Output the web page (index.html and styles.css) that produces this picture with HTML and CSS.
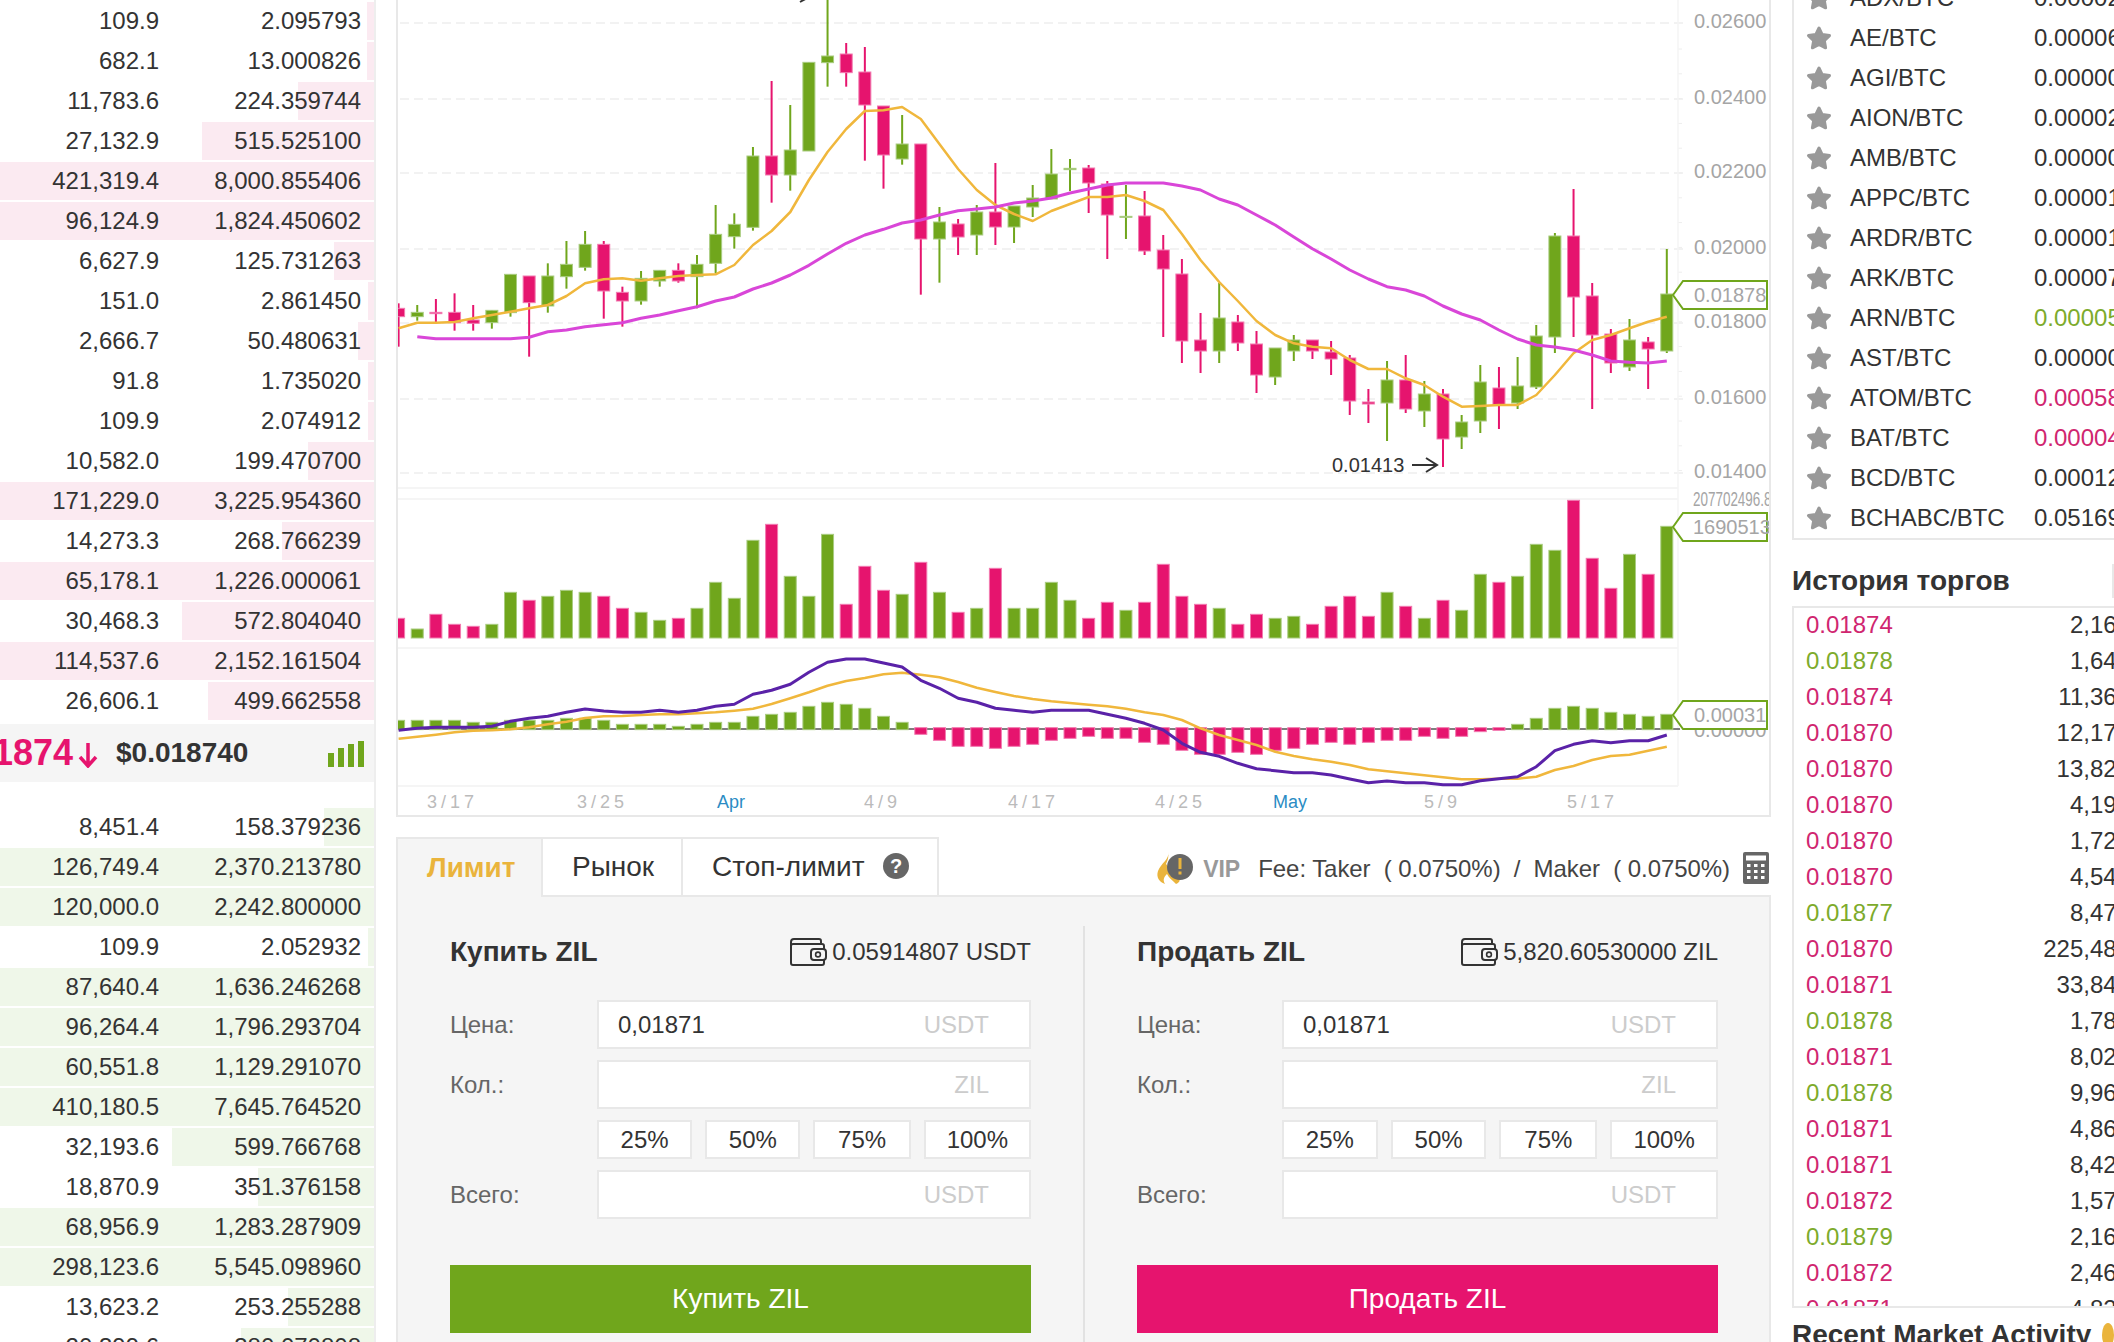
FILE: index.html
```html
<!DOCTYPE html>
<html lang="ru">
<head>
  <meta charset="UTF-8">
  <title>ZIL/USDT</title>
  <link rel="stylesheet" href="styles.css">
</head>
<body>

  <svg class="defs" width="0" height="0">
    <symbol id="star" viewBox="0 0 26 26">
      <polygon points="13,3 16.2,9.6 23.5,10.6 18.3,15.6 19.6,22.8 13,19.4 6.4,22.8 7.7,15.6 2.5,10.6 9.8,9.6" fill="#999" stroke="#999" stroke-width="3" stroke-linejoin="round"/>
    </symbol>
    <symbol id="wallet" viewBox="0 0 38 30">
      <path d="M2 9V5a3 3 0 0 1 3-3h25a2 2 0 0 1 2 2v3" fill="none" stroke="#333" stroke-width="2"/>
      <rect x="2" y="7" width="33" height="21" rx="2" fill="none" stroke="#333" stroke-width="2"/>
      <rect x="22" y="12" width="15" height="11" rx="3" fill="#f5f5f5" stroke="#333" stroke-width="2"/>
      <circle cx="29" cy="17.5" r="2.4" fill="none" stroke="#333" stroke-width="1.6"/>
    </symbol>
  </svg>

  <div class="page">

    <!-- order book -->
    <div class="book">
      <div class="row"><i class="bar ask" style="width:7px"></i><span class="p">109.9</span><span class="q">2.095793</span></div>
      <div class="row"><i class="bar ask" style="width:7px"></i><span class="p">682.1</span><span class="q">13.000826</span></div>
      <div class="row"><i class="bar ask" style="width:76px"></i><span class="p">11,783.6</span><span class="q">224.359744</span></div>
      <div class="row"><i class="bar ask" style="width:172px"></i><span class="p">27,132.9</span><span class="q">515.525100</span></div>
      <div class="row"><i class="bar ask" style="width:374px"></i><span class="p">421,319.4</span><span class="q">8,000.855406</span></div>
      <div class="row"><i class="bar ask" style="width:374px"></i><span class="p">96,124.9</span><span class="q">1,824.450602</span></div>
      <div class="row"><i class="bar ask" style="width:40px"></i><span class="p">6,627.9</span><span class="q">125.731263</span></div>
      <div class="row"><i class="bar ask" style="width:6px"></i><span class="p">151.0</span><span class="q">2.861450</span></div>
      <div class="row"><i class="bar ask" style="width:16px"></i><span class="p">2,666.7</span><span class="q">50.480631</span></div>
      <div class="row"><i class="bar ask" style="width:6px"></i><span class="p">91.8</span><span class="q">1.735020</span></div>
      <div class="row"><i class="bar ask" style="width:6px"></i><span class="p">109.9</span><span class="q">2.074912</span></div>
      <div class="row"><i class="bar ask" style="width:66px"></i><span class="p">10,582.0</span><span class="q">199.470700</span></div>
      <div class="row"><i class="bar ask" style="width:374px"></i><span class="p">171,229.0</span><span class="q">3,225.954360</span></div>
      <div class="row"><i class="bar ask" style="width:92px"></i><span class="p">14,273.3</span><span class="q">268.766239</span></div>
      <div class="row"><i class="bar ask" style="width:374px"></i><span class="p">65,178.1</span><span class="q">1,226.000061</span></div>
      <div class="row"><i class="bar ask" style="width:192px"></i><span class="p">30,468.3</span><span class="q">572.804040</span></div>
      <div class="row"><i class="bar ask" style="width:374px"></i><span class="p">114,537.6</span><span class="q">2,152.161504</span></div>
      <div class="row"><i class="bar ask" style="width:166px"></i><span class="p">26,606.1</span><span class="q">499.662558</span></div>

      <div class="mid">
        <span class="last">0.01874</span>
        <svg class="down" width="20" height="26" viewBox="0 0 20 26"><path d="M10 1V23M2 15L10 24L18 15" fill="none" stroke="#e6146e" stroke-width="3.5"/></svg>
        <span class="usd">$0.018740</span>
        <span class="signal"><i style="height:14px"></i><i style="height:19px"></i><i style="height:23px"></i><i style="height:26px"></i></span>
      </div>

      <div class="row"><i class="bar bid" style="width:50px"></i><span class="p">8,451.4</span><span class="q">158.379236</span></div>
      <div class="row"><i class="bar bid" style="width:374px"></i><span class="p">126,749.4</span><span class="q">2,370.213780</span></div>
      <div class="row"><i class="bar bid" style="width:374px"></i><span class="p">120,000.0</span><span class="q">2,242.800000</span></div>
      <div class="row"><i class="bar bid" style="width:6px"></i><span class="p">109.9</span><span class="q">2.052932</span></div>
      <div class="row"><i class="bar bid" style="width:374px"></i><span class="p">87,640.4</span><span class="q">1,636.246268</span></div>
      <div class="row"><i class="bar bid" style="width:374px"></i><span class="p">96,264.4</span><span class="q">1,796.293704</span></div>
      <div class="row"><i class="bar bid" style="width:374px"></i><span class="p">60,551.8</span><span class="q">1,129.291070</span></div>
      <div class="row"><i class="bar bid" style="width:374px"></i><span class="p">410,180.5</span><span class="q">7,645.764520</span></div>
      <div class="row"><i class="bar bid" style="width:202px"></i><span class="p">32,193.6</span><span class="q">599.766768</span></div>
      <div class="row"><i class="bar bid" style="width:116px"></i><span class="p">18,870.9</span><span class="q">351.376158</span></div>
      <div class="row"><i class="bar bid" style="width:374px"></i><span class="p">68,956.9</span><span class="q">1,283.287909</span></div>
      <div class="row"><i class="bar bid" style="width:374px"></i><span class="p">298,123.6</span><span class="q">5,545.098960</span></div>
      <div class="row"><i class="bar bid" style="width:86px"></i><span class="p">13,623.2</span><span class="q">253.255288</span></div>
      <div class="row"><i class="bar bid" style="width:133px"></i><span class="p">20,399.6</span><span class="q">380.070808</span></div>
    </div>

    <!-- chart and order form -->
    <div class="main">
      <div class="chart-panel">
        <svg id="chart" width="1371" height="815" viewBox="398 0 1371 815">
          <g id="chart-back"></g>
          <g id="chart-marks"></g>

          <text class="axis" x="1694" y="28">0.02600</text>
          <text class="axis" x="1694" y="104">0.02400</text>
          <text class="axis" x="1694" y="178">0.02200</text>
          <text class="axis" x="1694" y="254">0.02000</text>
          <text class="axis" x="1694" y="328">0.01800</text>
          <text class="axis" x="1694" y="404">0.01600</text>
          <text class="axis" x="1694" y="478">0.01400</text>

          <text class="extreme" x="718" y="-1">0.02695</text>
          <path class="arrow" d="M788 -3H808M800 -8L809 -3L800 2"/>
          <text class="extreme" x="1332" y="472">0.01413</text>
          <path class="arrow" d="M1412 465H1436M1426 458L1437 465L1426 472"/>

          <polygon class="tag" points="1673,295 1683,281 1767,281 1767,309 1683,309"/>
          <text class="axis" x="1694" y="302">0.01878</text>

          <text class="axis" x="1693" y="506" textLength="86" lengthAdjust="spacingAndGlyphs">207702496.80</text>
          <polygon class="tag" points="1673,527 1683,513 1767,513 1767,541 1683,541"/>
          <text class="axis" x="1693" y="534">1690513</text>

          <text class="axis" x="1694" y="737">0.00000</text>
          <polygon class="tag" points="1673,715 1683,701 1767,701 1767,729 1683,729"/>
          <text class="axis" x="1694" y="722">0.00031</text>

          <text class="date" x="427" y="808">3/17</text>
          <text class="date" x="577" y="808">3/25</text>
          <text class="month" x="717" y="808">Apr</text>
          <text class="date" x="864" y="808">4/9</text>
          <text class="date" x="1008" y="808">4/17</text>
          <text class="date" x="1155" y="808">4/25</text>
          <text class="month" x="1273" y="808">May</text>
          <text class="date" x="1424" y="808">5/9</text>
          <text class="date" x="1567" y="808">5/17</text>
        </svg>
      </div>

      <div class="order-head">
        <div class="tab active">Лимит</div>
        <div class="tab">Рынок</div>
        <div class="tab">Стоп-лимит
          <svg class="help" width="26" height="26" viewBox="0 0 26 26"><circle cx="13" cy="13" r="13" fill="#666"/><text x="13" y="20" text-anchor="middle" class="help-mark">?</text></svg>
        </div>
        <div class="fee-line">
          <svg class="vip-icon" width="38" height="32" viewBox="0 0 38 32">
            <path d="M12 0C14 7 5 11 2 19C0 25 3 30 9 32C6 27 9 24 11 22C13 26 16 28 20 32C25 30 24 27 22 25L10 12C12 8 13 4 12 0Z" fill="#eab43c"/>
            <circle cx="24" cy="15" r="13" fill="#666"/>
            <rect x="22.5" y="6" width="3" height="11" fill="#eab43c"/>
            <rect x="22.5" y="19.5" width="3" height="3" fill="#eab43c"/>
          </svg>
          <span class="vip">VIP</span>
          <span class="fee">Fee: Taker &nbsp;( 0.0750%) &nbsp;/ &nbsp;Maker &nbsp;( 0.0750%)</span>
          <svg class="calc" width="26" height="32" viewBox="0 0 26 32">
            <rect width="26" height="32" rx="2" fill="#666"/>
            <rect x="3" y="3.5" width="20" height="5" fill="#fff"/>
            <g fill="#fff">
              <rect x="4" y="12" width="3.5" height="3"/><rect x="11" y="12" width="3.5" height="3"/><rect x="18" y="12" width="3.5" height="3"/>
              <rect x="4" y="18" width="3.5" height="3"/><rect x="11" y="18" width="3.5" height="3"/><rect x="18" y="18" width="3.5" height="3"/>
              <rect x="4" y="24" width="3.5" height="3"/><rect x="11" y="24" width="3.5" height="3"/><rect x="18" y="24" width="3.5" height="3"/>
            </g>
          </svg>
        </div>
      </div>

      <div class="order-body">
        <div class="half">
          <div class="form-title">
            <span class="form-name">Купить ZIL</span>
            <span class="balance"><svg class="wallet" width="38" height="30"><use href="#wallet"/></svg>0.05914807 USDT</span>
          </div>
          <div class="field"><label>Цена:</label><div class="box"><span>0,01871</span><span class="unit">USDT</span></div></div>
          <div class="field"><label>Кол.:</label><div class="box"><span></span><span class="unit">ZIL</span></div></div>
          <div class="percents"><span>25%</span><span>50%</span><span>75%</span><span>100%</span></div>
          <div class="field"><label>Всего:</label><div class="box"><span></span><span class="unit">USDT</span></div></div>
          <button class="submit buy">Купить ZIL</button>
        </div>
        <div class="half">
          <div class="form-title">
            <span class="form-name">Продать ZIL</span>
            <span class="balance"><svg class="wallet" width="38" height="30"><use href="#wallet"/></svg>5,820.60530000 ZIL</span>
          </div>
          <div class="field"><label>Цена:</label><div class="box"><span>0,01871</span><span class="unit">USDT</span></div></div>
          <div class="field"><label>Кол.:</label><div class="box"><span></span><span class="unit">ZIL</span></div></div>
          <div class="percents"><span>25%</span><span>50%</span><span>75%</span><span>100%</span></div>
          <div class="field"><label>Всего:</label><div class="box"><span></span><span class="unit">USDT</span></div></div>
          <button class="submit sell">Продать ZIL</button>
        </div>
      </div>
    </div>

    <!-- markets and trade history -->
    <div class="side">
      <div class="markets">
        <div class="market"><svg class="star" width="26" height="26"><use href="#star"/></svg><span class="pair">ADX/BTC</span><span class="rate">0.00002140</span></div>
        <div class="market"><svg class="star" width="26" height="26"><use href="#star"/></svg><span class="pair">AE/BTC</span><span class="rate">0.00006120</span></div>
        <div class="market"><svg class="star" width="26" height="26"><use href="#star"/></svg><span class="pair">AGI/BTC</span><span class="rate">0.00000410</span></div>
        <div class="market"><svg class="star" width="26" height="26"><use href="#star"/></svg><span class="pair">AION/BTC</span><span class="rate">0.00002360</span></div>
        <div class="market"><svg class="star" width="26" height="26"><use href="#star"/></svg><span class="pair">AMB/BTC</span><span class="rate">0.00000520</span></div>
        <div class="market"><svg class="star" width="26" height="26"><use href="#star"/></svg><span class="pair">APPC/BTC</span><span class="rate">0.00001010</span></div>
        <div class="market"><svg class="star" width="26" height="26"><use href="#star"/></svg><span class="pair">ARDR/BTC</span><span class="rate">0.00001280</span></div>
        <div class="market"><svg class="star" width="26" height="26"><use href="#star"/></svg><span class="pair">ARK/BTC</span><span class="rate">0.00007540</span></div>
        <div class="market"><svg class="star" width="26" height="26"><use href="#star"/></svg><span class="pair">ARN/BTC</span><span class="rate up">0.00005230</span></div>
        <div class="market"><svg class="star" width="26" height="26"><use href="#star"/></svg><span class="pair">AST/BTC</span><span class="rate">0.00000330</span></div>
        <div class="market"><svg class="star" width="26" height="26"><use href="#star"/></svg><span class="pair">ATOM/BTC</span><span class="rate down-c">0.00058100</span></div>
        <div class="market"><svg class="star" width="26" height="26"><use href="#star"/></svg><span class="pair">BAT/BTC</span><span class="rate down-c">0.00004170</span></div>
        <div class="market"><svg class="star" width="26" height="26"><use href="#star"/></svg><span class="pair">BCD/BTC</span><span class="rate">0.00012600</span></div>
        <div class="market"><svg class="star" width="26" height="26"><use href="#star"/></svg><span class="pair">BCHABC/BTC</span><span class="rate">0.05169000</span></div>
      </div>

      <h3 class="side-title">История торгов<i class="side-mark"></i></h3>

      <div class="trades">
        <div class="trade"><span class="down-c">0.01874</span><span>2,164.0</span></div>
        <div class="trade"><span class="up">0.01878</span><span>1,642.0</span></div>
        <div class="trade"><span class="down-c">0.01874</span><span>11,364.0</span></div>
        <div class="trade"><span class="down-c">0.01870</span><span>12,179.0</span></div>
        <div class="trade"><span class="down-c">0.01870</span><span>13,821.0</span></div>
        <div class="trade"><span class="down-c">0.01870</span><span>4,196.0</span></div>
        <div class="trade"><span class="down-c">0.01870</span><span>1,727.0</span></div>
        <div class="trade"><span class="down-c">0.01870</span><span>4,541.0</span></div>
        <div class="trade"><span class="up">0.01877</span><span>8,474.0</span></div>
        <div class="trade"><span class="down-c">0.01870</span><span>225,481.0</span></div>
        <div class="trade"><span class="down-c">0.01871</span><span>33,844.0</span></div>
        <div class="trade"><span class="up">0.01878</span><span>1,784.0</span></div>
        <div class="trade"><span class="down-c">0.01871</span><span>8,026.0</span></div>
        <div class="trade"><span class="up">0.01878</span><span>9,960.0</span></div>
        <div class="trade"><span class="down-c">0.01871</span><span>4,860.0</span></div>
        <div class="trade"><span class="down-c">0.01871</span><span>8,427.0</span></div>
        <div class="trade"><span class="down-c">0.01872</span><span>1,571.0</span></div>
        <div class="trade"><span class="up">0.01879</span><span>2,165.0</span></div>
        <div class="trade"><span class="down-c">0.01872</span><span>2,464.0</span></div>
        <div class="trade"><span class="down-c">0.01871</span><span>4,823.0</span></div>
      </div>

      <h3 class="side-title recent">Recent Market Activity <i class="recent-mark"></i></h3>
    </div>

  </div>

  <script src="chart.js"></script>
</body>
</html>
```

FILE: styles.css
```css
* {
  box-sizing: border-box;
}

html, body {
  margin: 0;
  height: 100%;
  overflow: hidden;
  background: #fff;
}

body {
  font-family: 'Liberation Sans', 'Noto Sans', sans-serif;
  font-size: 24px;
  color: #333;
}

.defs {
  position: absolute;
}

.page {
  display: flex;
  width: 2114px;
  height: 1342px;
  overflow: hidden;
}

/* order book */
.book {
  flex: 0 0 376px;
  padding-top: 1px;
  border-right: 2px solid #eee;
}

.row {
  position: relative;
  display: flex;
  height: 40px;
  line-height: 40px;
}

.bar {
  position: absolute;
  top: 1px;
  bottom: 1px;
  right: 0;
}

.bar.ask {
  background: #fbeaf1;
}

.bar.bid {
  background: #eff7e9;
}

.p, .q {
  position: relative;
  text-align: right;
}

.p {
  flex: 0 0 159px;
}

.q {
  flex: 1;
  padding-right: 13px;
}

.mid {
  display: flex;
  align-items: center;
  height: 58px;
  margin: 3px 0 25px;
  background: #f5f5f5;
}

.last {
  flex: none;
  width: 130px;
  margin-left: -57px;
  font-size: 36px;
  font-weight: bold;
  color: #e6146e;
}

.down {
  flex: none;
  margin: 4px 0 0 5px;
}

.usd {
  margin-left: 18px;
  font-size: 28px;
  font-weight: bold;
}

.signal {
  display: flex;
  align-items: flex-end;
  gap: 4px;
  height: 26px;
  margin: 2px 10px 0 auto;
}

.signal i {
  width: 6px;
  background: #70a61c;
}

/* chart */
.main {
  flex: 0 0 1375px;
  display: flex;
  flex-direction: column;
  margin-left: 20px;
}

.chart-panel {
  flex: none;
  height: 817px;
  border: 2px solid #e8e8e8;
  border-top: none;
}

#chart {
  display: block;
  font-family: 'Liberation Sans', 'Noto Sans', sans-serif;
}

.axis {
  font-size: 20px;
  fill: #a5a5a5;
}

.extreme {
  font-size: 20px;
  fill: #333;
}

.arrow {
  fill: none;
  stroke: #333;
  stroke-width: 2;
}

.tag {
  fill: #fff;
  stroke: #70a61c;
  stroke-width: 2;
}

.date {
  font-size: 18px;
  letter-spacing: 4px;
  fill: #bbb;
}

.month {
  font-size: 18px;
  fill: #2b8cc4;
}

/* order form */
.order-head {
  flex: none;
  display: flex;
  height: 60px;
  margin-top: 20px;
}

.tab {
  flex: none;
  display: flex;
  align-items: center;
  padding: 0 0 0 29px;
  font-size: 28px;
  white-space: nowrap;
  background: #fff;
  border: 2px solid #e8e8e8;
  border-left: none;
}

.tab.active {
  width: 147px;
  font-weight: bold;
  color: #eab43c;
  background: #f5f5f5;
  border-left: 2px solid #e8e8e8;
  border-bottom: none;
}

.tab:nth-child(2) {
  width: 140px;
}

.tab:nth-child(3) {
  width: 256px;
}

.help {
  flex: none;
  margin: -3px 0 0 19px;
}

.help-mark {
  font-size: 20px;
  font-weight: bold;
  fill: #fff;
}

.fee-line {
  flex: 1;
  display: flex;
  align-items: center;
  justify-content: flex-end;
  padding: 6px 2px 2px 0;
  border-bottom: 2px solid #e8e8e8;
}

.vip {
  margin: 2px 0 0 9px;
  font-size: 23px;
  font-weight: bold;
  color: #999;
}

.fee {
  margin: 2px 0 0 18px;
  letter-spacing: -0.06px;
  color: #444;
}

.calc {
  margin-left: 13px;
}

.order-body {
  flex: 1;
  display: flex;
  padding-top: 29px;
  background: #f5f5f5;
  border: 2px solid #e8e8e8;
  border-width: 0 2px;
}

.half {
  flex: 1;
  padding: 0 52px;
}

.half + .half {
  padding: 0 51px 0 52px;
  border-left: 2px solid #e2e2e2;
}

.form-title {
  display: flex;
  align-items: center;
  justify-content: space-between;
  height: 51px;
  margin-bottom: 23px;
}

.form-name {
  font-size: 28px;
  font-weight: bold;
}

.balance {
  display: flex;
  align-items: center;
}

.wallet {
  margin-right: 5px;
}

.field {
  display: flex;
  align-items: center;
  height: 49px;
  margin-bottom: 11px;
}

.field label {
  flex: 0 0 147px;
  color: #666;
}

.half + .half .field label {
  flex-basis: 145px;
}

.box {
  flex: 1;
  display: flex;
  align-items: center;
  justify-content: space-between;
  height: 49px;
  padding: 0 40px 0 19px;
  background: #fff;
  border: 2px solid #e8e8e8;
}

.unit {
  color: #ccc;
}

.percents {
  display: grid;
  grid-template-columns: 95fr 95fr 97fr 107fr;
  gap: 13px;
  height: 39px;
  margin: 0 0 11px 147px;
}

.half + .half .percents {
  margin-left: 145px;
}

.percents span {
  text-align: center;
  line-height: 35px;
  background: #fff;
  border: 2px solid #e8e8e8;
}

.submit {
  display: block;
  width: 100%;
  height: 68px;
  margin-top: 46px;
  border: none;
  color: #fff;
  font-family: inherit;
  font-size: 28px;
}

.buy {
  background: #70a61c;
}

.sell {
  background: #e6146e;
}

/* markets and trades */
.side {
  flex: 0 0 322px;
  margin-left: 21px;
  overflow: hidden;
}

.markets {
  height: 562px;
  margin-top: -22px;
  padding-left: 12px;
  border: 2px solid #e8e8e8;
  border-width: 0 0 2px 2px;
}

.market {
  display: flex;
  align-items: center;
  height: 40px;
  white-space: nowrap;
}

.star {
  flex: none;
}

.pair {
  flex: 0 0 184px;
  margin-left: 18px;
}

.rate {
  flex: none;
}

.up {
  color: #7dab2c;
}

.down-c {
  color: #d02670;
}

.side-title {
  position: relative;
  display: flex;
  align-items: center;
  height: 34px;
  margin: 24px 0 8px;
  font-size: 28px;
  white-space: nowrap;
}

.side-mark {
  margin-left: auto;
  width: 2px;
  height: 34px;
  background: #e8e8e8;
}

.trades {
  width: 358px;
  height: 702px;
  padding: 0 0 0 12px;
  overflow: hidden;
  border: 2px solid #e8e8e8;
  border-width: 2px 0 2px 2px;
}

.trade {
  display: flex;
  justify-content: space-between;
  height: 36px;
  line-height: 34px;
}

.recent {
  margin: 10px 0 0;
}

.recent-mark {
  width: 24px;
  height: 24px;
  margin-left: 11px;
  border-radius: 50%;
  background: #eab43c;
}
```

FILE: chart.js
```js
// candle data, read as y * 3 : [up, bodyTop, bodyBottom, wickTop, wickBottom]
const candles = [
  [0,925,950,910,1040],[1,937,950,915,962],[0,937,941,897,968],[0,937,968,880,992],[0,960,970,915,992],
  [1,931,968,931,986],[1,823,938,823,950],[0,828,908,828,1070],[1,828,918,790,938],[1,793,830,723,866],
  [1,733,802,693,812],[0,733,873,723,956],[0,877,903,860,980],[1,835,903,813,914],[1,811,843,811,860],
  [0,811,843,790,848],[1,793,830,765,925],[1,703,790,615,820],[1,673,710,640,746],[1,468,682,441,692],
  [0,468,525,243,608],[1,450,525,315,572],[1,187,453,187,453],[1,168,188,-30,260],[0,162,218,129,260],
  [0,216,315,141,482],[0,318,465,318,566],[1,432,477,345,494],[0,432,717,432,884],[1,666,717,621,848],
  [0,672,711,657,765],[1,636,705,615,765],[0,636,681,489,735],[1,618,681,618,729],[1,594,621,555,651],
  [1,522,597,447,597],[1,505,509,477,573],[0,504,549,495,639],[0,552,645,543,777],[1,649,652,555,717],
  [0,648,753,573,765],[0,750,807,705,1011],[0,822,1023,777,1089],[0,1020,1053,939,1119],[1,954,1053,849,1089],
  [0,966,1029,945,1053],[0,1032,1125,993,1179],[1,1044,1131,1044,1155],[1,1020,1053,1005,1083],[0,1020,1053,1020,1077],
  [0,1056,1077,1023,1125],[0,1074,1203,1065,1245],[0,1206,1212,1167,1269],[1,1140,1209,1083,1323],[0,1140,1227,1065,1239],
  [1,1182,1233,1143,1281],[0,1182,1317,1167,1401],[1,1266,1311,1245,1347],[1,1146,1263,1095,1299],[0,1164,1215,1101,1287],
  [1,1158,1209,1071,1227],[1,1008,1161,975,1167],[1,708,1011,699,1059],[0,708,891,567,1011],[0,888,1005,849,1227],
  [0,1002,1089,987,1119],[1,1020,1101,957,1113],[0,1026,1047,1011,1167],[1,882,1053,747,1059]
];

const ma7 = [985,968,968,966,955,945,935,925,915,888,850,838,835,842,835,828,825,823,795,735,693,636,540,456,387,333,331,321,357,432,507,570,615,642,663,633,612,591,591,585,603,630,702,780,846,903,963,1005,1030,1040,1045,1080,1107,1107,1135,1155,1190,1220,1218,1215,1215,1185,1125,1060,1020,1005,985,965,950];
const ma25 = [null,1010,1016,1016,1016,1016,1016,1012,995,990,980,974,968,955,945,932,920,903,891,867,849,825,796,762,730,705,688,669,660,645,632,627,621,609,603,594,579,567,555,549,549,549,558,570,597,615,645,675,711,746,777,810,837,860,870,888,918,942,960,990,1017,1035,1041,1050,1065,1083,1087,1089,1083];

const volume = [415,447,403,433,439,433,337,361,349,331,337,349,385,397,421,415,385,307,355,181,133,289,349,163,373,259,331,343,247,337,397,385,265,385,385,307,361,415,367,391,367,253,349,373,385,433,403,415,409,433,379,349,409,337,379,415,361,391,283,307,289,193,211,61,235,325,223,283,139];

// macd pane, 746 is the zero line
const hist = [721,721,721,721,727,727,721,721,721,715,715,721,733,733,733,739,733,727,727,709,703,697,679,667,673,685,709,727,763,781,799,799,805,799,793,781,775,769,775,775,787,793,811,823,823,817,823,811,805,793,787,793,787,781,781,769,775,769,755,751,733,715,685,679,685,697,703,709,703];
const dif = [751,745,742,742,742,739,724,715,709,697,687,693,697,697,691,697,691,679,673,643,631,613,577,547,537,537,549,561,601,625,655,667,685,691,697,691,691,691,703,715,730,750,790,817,829,850,866,872,878,878,885,897,908,903,908,908,914,914,902,896,890,860,812,793,782,788,782,782,765];
const dea = [776,770,764,757,752,751,748,742,733,725,714,709,708,705,703,703,700,697,692,686,672,655,637,617,603,594,583,578,584,592,606,623,636,648,657,664,669,674,679,686,697,705,720,745,765,780,795,815,828,838,845,855,868,874,880,886,892,898,898,896,896,890,870,858,840,828,824,812,800];

const GREEN = '#70a61c', GREEN_EDGE = '#a9cc80';
const PINK = '#e6146e', PINK_EDGE = '#f27ab0';
const NS = 'http://www.w3.org/2000/svg';

function add(parent, tag, attrs) {
  const el = document.createElementNS(NS, tag);
  for (const k in attrs) el.setAttribute(k, attrs[k]);
  parent.appendChild(el);
}

function xOf(i) {
  return 398.6 + 18.65 * i;
}

function bar(g, i, top, bottom, up) {
  add(g, 'rect', {
    x: xOf(i) - 6, y: top, width: 12, height: Math.max(bottom - top, 1),
    fill: up ? GREEN : PINK, stroke: up ? GREEN_EDGE : PINK_EDGE, 'stroke-width': 1
  });
}

function line(g, data, toY, color, width) {
  const pts = [];
  data.forEach((v, i) => {
    if (v !== null) pts.push(xOf(i).toFixed(1) + ',' + toY(v).toFixed(1));
  });
  add(g, 'polyline', { points: pts.join(' '), fill: 'none', stroke: color, 'stroke-width': width, 'stroke-linejoin': 'round' });
}

const back = document.getElementById('chart-back');
const marks = document.getElementById('chart-marks');

// grid
[23, 99, 173, 249, 323, 399, 473].forEach(y => {
  add(back, 'line', { x1: 400, x2: 1686, y1: y, y2: y, stroke: '#eee', 'stroke-width': 1.5, 'stroke-dasharray': '9 5' });
});
for (let y = 49; y < 473; y += 24.8) {
  add(back, 'line', { x1: 1678, x2: 1682, y1: y, y2: y, stroke: '#eee' });
}
add(back, 'line', { x1: 1678, x2: 1678, y1: 0, y2: 786, stroke: '#f4f4f4', 'stroke-width': 1.5 });
[488, 499, 648, 786].forEach(y => {
  add(back, 'line', { x1: 398, x2: 1678, y1: y, y2: y, stroke: '#f5f5f5', 'stroke-width': 2 });
});
add(back, 'line', { x1: 398, x2: 1680, y1: 729, y2: 729, stroke: '#555', 'stroke-width': 1.5 });

// price pane
candles.forEach((c, i) => {
  const x = xOf(i);
  add(marks, 'rect', { x: x - 1, y: c[3] / 3, width: 2, height: (c[4] - c[3]) / 3, fill: c[0] ? GREEN : PINK });
  bar(marks, i, c[1] / 3, c[2] / 3, c[0]);
});
line(marks, ma7, v => v / 3, '#f0b73c', 2.5);
line(marks, ma25, v => v / 3, '#d946d8', 3);

// volume pane
volume.forEach((v, i) => {
  bar(marks, i, 480 + v / 3, 638, candles[i][0]);
});

// macd pane
const ZERO = 480 + 746 / 3;
hist.forEach((v, i) => {
  const y = 480 + v / 3;
  if (v < 746) bar(marks, i, y, ZERO + 1, true);
  else bar(marks, i, ZERO - 1, y, false);
});
line(marks, dea, v => 480 + v / 3, '#f0b73c', 2.5);
line(marks, dif, v => 480 + v / 3, '#5a22a8', 3);
```
